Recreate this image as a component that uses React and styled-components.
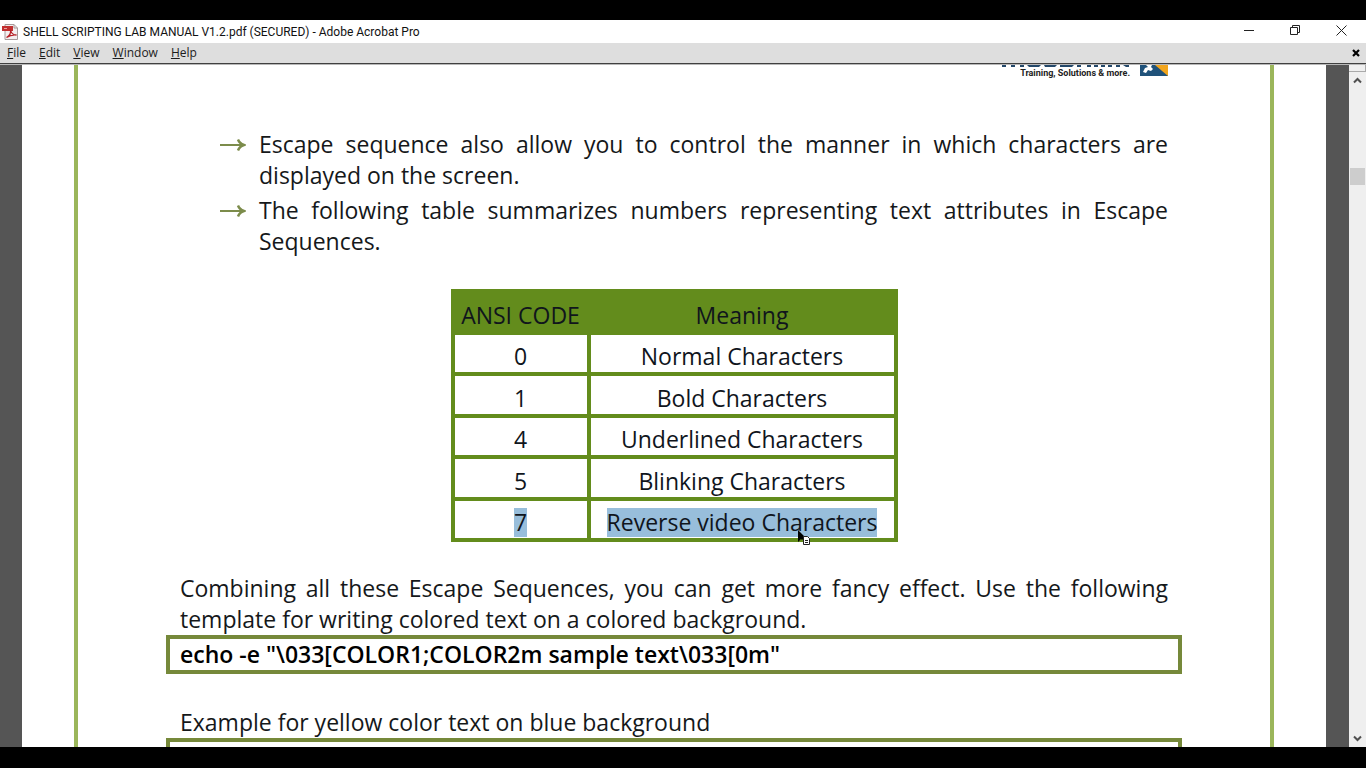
import React from "react";
import styled, { createGlobalStyle } from "styled-components";

const GlobalStyle = createGlobalStyle`
  *, *::before, *::after { box-sizing: border-box; }
  body { margin: 0; background: #000; }
  button { font: inherit; color: inherit; border: 0; background: none; padding: 0; }
`;

const Screen = styled.div`
  display: flex;
  flex-direction: column;
  height: 100vh;
  padding: 20px 0 21px;
  overflow: hidden;
  background: #000;
`;

const TitleBar = styled.header`
  display: flex;
  flex: none;
  align-items: center;
  height: 23px;
  padding-left: 2px;
  background: #fff;
  color: #111;
  font: 12px/16px Roboto, "Liberation Sans", sans-serif;
`;

const Title = styled.h1`
  flex: 1;
  margin: 0 0 0 4px;
  font: inherit;
  white-space: nowrap;
`;

const WindowButton = styled.button`
  display: flex;
  align-items: center;
  justify-content: center;
  width: 46px;
  height: 20px;
  align-self: flex-start;
  &:last-child { margin-right: 2px; }
`;

const MenuBar = styled.nav`
  display: flex;
  flex: none;
  align-items: center;
  gap: 13px;
  height: 21px;
  padding: 0 6px 0 7px;
  border-bottom: 1px solid #404040;
  background: #dedede;
  color: #1c1c1c;
  font: 12px/16px "Open Sans", "Liberation Sans", sans-serif;
`;

const CloseDocument = styled.button`
  display: flex;
  margin-left: auto;
`;

const Workspace = styled.div`
  display: flex;
  flex: 1;
  min-height: 0;
  border-top: 1px solid #b8b8b8;
  background: #555;
`;

const Page = styled.main`
  flex: 1;
  min-width: 0;
  margin: 0 23px 0 22px;
  padding: 0 52px;
  overflow: hidden;
  background: #fff;
  color: #15181a;
  font: 23px/31px "Open Sans", "Noto Sans", sans-serif;
`;

const PageFrame = styled.div`
  min-height: 100%;
  padding: 0 102px;
  border: solid #9bb65b;
  border-width: 0 4px;
`;

const PageHeader = styled.header`
  display: flex;
  justify-content: flex-end;
  align-items: flex-start;
  gap: 10px;
  height: 12px;
  margin-bottom: 52px;
`;

const Brand = styled.div`
  display: flex;
  flex-direction: column;
  align-items: flex-end;
`;

const Tagline = styled.span`
  color: #222;
  font: 700 9px/10px Roboto, "Liberation Sans", sans-serif;
  white-space: nowrap;
`;

const NoteList = styled.ul`
  display: flex;
  flex-direction: column;
  gap: 4px;
  margin: 0 0 32px;
  padding: 0;
  list-style: none;
`;

const Note = styled.li`
  display: grid;
  grid-template-columns: 39px 1fr;
  padding-left: 40px;
  text-align: justify;
  svg { margin-top: 9px; }
`;

const CodeTable = styled.table`
  width: 447px;
  margin: 0 auto 31px;
  table-layout: fixed;
  border-collapse: collapse;
  color: #10151c;
  text-align: center;
`;

const HeadCell = styled.th`
  width: ${(p) => p.$width || "auto"};
  height: 42px;
  padding: 7px 0 0;
  border: 4px solid #638c1c;
  background: #638c1c;
  font-weight: 400;
`;

const Row = styled.tr`
  height: 41px;
  &:nth-child(even) { height: 42px; }
`;

const Cell = styled.td`
  padding: 6px 0 0;
  border: 4px solid #638c1c;
`;

const Selected = styled.mark`
  position: relative;
  display: inline-block;
  height: 29px;
  line-height: 29px;
  background: #98bedb;
  color: inherit;
`;

const Pointer = styled.svg`
  position: absolute;
  right: 64px;
  top: 22px;
`;

const Paragraph = styled.p`
  margin: 0;
  text-align: justify;
`;

const CodeBox = styled.pre`
  height: 39px;
  margin: 0 -14px 33px;
  padding: 0 10px;
  border: 4px solid #76893a;
  color: #000;
  font: 600 23px/31px "Open Sans", "Noto Sans", sans-serif;
`;

const ScrollBar = styled.aside`
  display: flex;
  flex: none;
  flex-direction: column;
  align-items: center;
  width: 17px;
  background: #efefef;
`;

const SplitHandle = styled.div`
  width: 100%;
  height: 7px;
  border: solid #aaa;
  border-width: 0 1px 1px 0;
`;

const ScrollButton = styled.button`
  display: flex;
  align-items: center;
  justify-content: center;
  width: 17px;
  height: 17px;
`;

const Track = styled.div`
  flex: 1;
  width: 15px;
  padding-top: 79px;
`;

const Thumb = styled.div`
  height: 17px;
  background: #cdcdcd;
`;

const rows = [
  ["0", "Normal Characters"],
  ["1", "Bold Characters"],
  ["4", "Underlined Characters"],
  ["5", "Blinking Characters"],
  ["7", "Reverse video Characters"],
];

function PdfIcon() {
  return (
    <svg width="17" height="16" viewBox="0 0 17 16">
      <path d="M3 .5h9l3.500 3.500v11.500H3z" fill="#f4eeee" stroke="#a69a9a" />
      <path d="M12 .5V4h3.500" fill="none" stroke="#a69a9a" />
      <path d="M0 2h11v5H0z" fill="#c23030" />
      <path d="M4.500 13.500c3-1.500 4.500-5 4-8 .5 3.500 3 5.500 6 5.500-4-.5-7 .5-10 2.500z" fill="none" stroke="#b71f24" strokeWidth="1.300" />
      <path d="M2 4.500h3" stroke="#e9a5a5" />
    </svg>
  );
}

function Arrow() {
  return (
    <svg width="26" height="14" viewBox="0 0 26 14" fill="none" stroke="#7c8c4b">
      <path d="M0 7h24" strokeWidth="2" />
      <path d="M18 1.500c1 3 3 4.500 6 5.500-3 1-5 2.500-6 5.500" strokeWidth="2.400" />
    </svg>
  );
}

function LogoLettering() {
  return (
    <svg width="128" height="3" viewBox="0 0 128 3" fill="#24486a">
      <path d="M0 0h4v2H0zM9 0h4v2H9zM18 0h4v2h-4zM25 0h14l-2 2H27zM42 0h13l-2 2H43zM58 0h14l-2 2H58zM75 0h4v2h-4zM85 0h4v2h-4zM92 0h4v2h-4zM99 0h4v2h-4zM106 0h4v2h-4zM114 0h4v2h-4zM121 0h6v2h-3z" />
    </svg>
  );
}

function LogoMark() {
  return (
    <svg width="28" height="11" viewBox="0 0 28 11">
      <path d="M0 0h28v11H0z" fill="#20527a" />
      <path d="M15 0h13v11z" fill="#f2a51d" />
      <path d="M6 0h6l-1 2 2 2-2 2-3-1-2 3-3-1 2-4 3-1z" fill="#fff" />
    </svg>
  );
}

function Chevron({ down }) {
  return (
    <svg width="9" height="7" viewBox="0 0 9 7" fill="none" stroke="#505050" strokeWidth="2">
      <path d={down ? "M1 1.500l3.500 3.500L8 1.500" : "M1 5.500L4.500 2 8 5.500"} />
    </svg>
  );
}

function MouseCursor() {
  return (
    <Pointer width="16" height="18" viewBox="0 0 16 18" aria-hidden="true">
      <path d="M1 0v12l3-3 1 1 3-3z" fill="#000" />
      <path d="M6.500 6.500h4l2 2v6h-6z" fill="#fff" stroke="#222" />
      <path d="M8 10.500h3M8 12.500h3" stroke="#222" />
    </Pointer>
  );
}

export default function App() {
  return (
    <Screen>
      <GlobalStyle />
      <TitleBar>
        <PdfIcon />
        <Title>SHELL SCRIPTING LAB MANUAL V1.2.pdf (SECURED) - Adobe Acrobat Pro</Title>
        <WindowButton aria-label="Minimize">
          <svg width="10" height="10" stroke="#222"><path d="M0 5.500h10" /></svg>
        </WindowButton>
        <WindowButton aria-label="Restore">
          <svg width="10" height="10" fill="none" stroke="#222">
            <path d="M.5 2.500h7v7h-7zM2.500 2.500v-2h7v7h-2" />
          </svg>
        </WindowButton>
        <WindowButton aria-label="Close">
          <svg width="11" height="11" stroke="#222"><path d="M.5.5l10 10M10.500.5l-10 10" /></svg>
        </WindowButton>
      </TitleBar>
      <MenuBar>
        {["File", "Edit", "View", "Window", "Help"].map((name) => (
          <button key={name}>
            <u>{name[0]}</u>
            {name.slice(1)}
          </button>
        ))}
        <CloseDocument aria-label="Close document">
          <svg width="8" height="8" stroke="#000" strokeWidth="2.200"><path d="M1 1l6 6M7 1L1 7" /></svg>
        </CloseDocument>
      </MenuBar>
      <Workspace>
        <Page>
          <PageFrame>
            <PageHeader>
              <Brand>
                <LogoLettering />
                <Tagline>Training, Solutions &amp; more.</Tagline>
              </Brand>
              <LogoMark />
            </PageHeader>
            <NoteList>
              <Note>
                <Arrow />
                <span>
                  Escape sequence also allow you to control the manner in which characters are displayed on
                  the screen.
                </span>
              </Note>
              <Note>
                <Arrow />
                <span>
                  The following table summarizes numbers representing text attributes in Escape Sequences.
                </span>
              </Note>
            </NoteList>
            <CodeTable>
              <thead>
                <tr>
                  <HeadCell $width="136px">ANSI CODE</HeadCell>
                  <HeadCell>Meaning</HeadCell>
                </tr>
              </thead>
              <tbody>
                {rows.map(([code, meaning]) => (
                  <Row key={code}>
                    <Cell>{code === "7" ? <Selected>{code}</Selected> : code}</Cell>
                    <Cell>
                      {code === "7" ? (
                        <Selected>
                          {meaning}
                          <MouseCursor />
                        </Selected>
                      ) : (
                        meaning
                      )}
                    </Cell>
                  </Row>
                ))}
              </tbody>
            </CodeTable>
            <Paragraph>
              Combining all these Escape Sequences, you can get more fancy effect. Use the following template
              for writing colored text on a colored background.
            </Paragraph>
            <CodeBox>{'echo -e "\\033[COLOR1;COLOR2m sample text\\033[0m"'}</CodeBox>
            <Paragraph>Example for yellow color text on blue background</Paragraph>
            <CodeBox />
          </PageFrame>
        </Page>
        <ScrollBar>
          <SplitHandle />
          <ScrollButton aria-label="Scroll up"><Chevron /></ScrollButton>
          <Track><Thumb /></Track>
          <ScrollButton aria-label="Scroll down"><Chevron down /></ScrollButton>
        </ScrollBar>
      </Workspace>
    </Screen>
  );
}
